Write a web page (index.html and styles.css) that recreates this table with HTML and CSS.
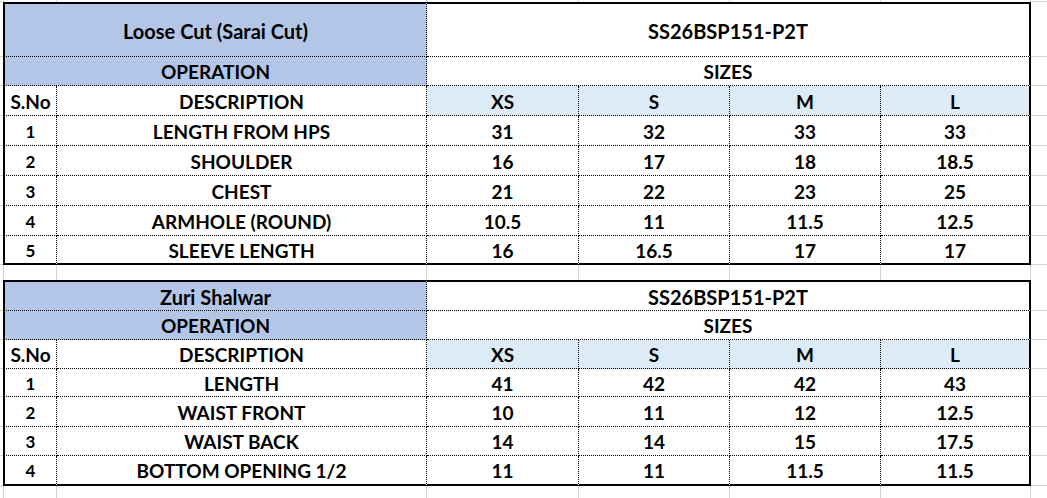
FILE: index.html
```html
<!DOCTYPE html>
<html lang="en">
<head>
<meta charset="utf-8">
<title>Size Chart SS26BSP151-P2T</title>
<link rel="stylesheet" href="styles.css">
</head>
<body>
<div class="sheet">
  <!-- top strip -->
  <div class="row">
    <div class="edge-top"></div>
    <div class="gl first"></div><div class="gl"></div><div class="gl"></div><div class="gl"></div><div class="gl"></div><div class="gl"></div>
    <div class="edge-top"></div>
  </div>

  <!-- table 1 -->
  <div class="row">
    <div class="edge"></div>
    <div class="c blue l t span2 title">Loose Cut (Sarai Cut)</div>
    <div class="c t r span4 title">SS26BSP151-P2T</div>
    <div class="edge"></div>
  </div>
  <div class="row">
    <div class="edge"></div>
    <div class="c blue l span2">OPERATION</div>
    <div class="c r span4">SIZES</div>
    <div class="edge"></div>
  </div>
  <div class="row">
    <div class="edge"></div>
    <div class="c l">S.No</div>
    <div class="c">DESCRIPTION</div>
    <div class="c sz">XS</div><div class="c sz">S</div><div class="c sz">M</div><div class="c sz r">L</div>
    <div class="edge"></div>
  </div>
  <div class="row">
    <div class="edge"></div>
    <div class="c l num">1</div><div class="c">LENGTH FROM HPS</div>
    <div class="c">31</div><div class="c">32</div><div class="c">33</div><div class="c r">33</div>
    <div class="edge"></div>
  </div>
  <div class="row">
    <div class="edge"></div>
    <div class="c l num">2</div><div class="c">SHOULDER</div>
    <div class="c">16</div><div class="c">17</div><div class="c">18</div><div class="c r">18.5</div>
    <div class="edge"></div>
  </div>
  <div class="row">
    <div class="edge"></div>
    <div class="c l num">3</div><div class="c">CHEST</div>
    <div class="c">21</div><div class="c">22</div><div class="c">23</div><div class="c r">25</div>
    <div class="edge"></div>
  </div>
  <div class="row">
    <div class="edge"></div>
    <div class="c l num">4</div><div class="c">ARMHOLE (ROUND)</div>
    <div class="c">10.5</div><div class="c">11</div><div class="c">11.5</div><div class="c r">12.5</div>
    <div class="edge"></div>
  </div>
  <div class="row">
    <div class="edge"></div>
    <div class="c l b num">5</div><div class="c b">SLEEVE LENGTH</div>
    <div class="c b">16</div><div class="c b">16.5</div><div class="c b">17</div><div class="c b r">17</div>
    <div class="edge"></div>
  </div>

  <!-- gap row -->
  <div class="row">
    <div></div>
    <div class="gl first"></div><div class="gl"></div><div class="gl"></div><div class="gl"></div><div class="gl"></div><div class="gl"></div>
    <div></div>
  </div>

  <!-- table 2 -->
  <div class="row">
    <div class="edge"></div>
    <div class="c blue l t span2 title">Zuri Shalwar</div>
    <div class="c t r span4 title">SS26BSP151-P2T</div>
    <div class="edge"></div>
  </div>
  <div class="row">
    <div class="edge"></div>
    <div class="c blue l span2">OPERATION</div>
    <div class="c r span4">SIZES</div>
    <div class="edge"></div>
  </div>
  <div class="row">
    <div class="edge"></div>
    <div class="c l">S.No</div>
    <div class="c">DESCRIPTION</div>
    <div class="c sz">XS</div><div class="c sz">S</div><div class="c sz">M</div><div class="c sz r">L</div>
    <div class="edge"></div>
  </div>
  <div class="row">
    <div class="edge"></div>
    <div class="c l num">1</div><div class="c">LENGTH</div>
    <div class="c">41</div><div class="c">42</div><div class="c">42</div><div class="c r">43</div>
    <div class="edge"></div>
  </div>
  <div class="row">
    <div class="edge"></div>
    <div class="c l num">2</div><div class="c">WAIST FRONT</div>
    <div class="c">10</div><div class="c">11</div><div class="c">12</div><div class="c r">12.5</div>
    <div class="edge"></div>
  </div>
  <div class="row">
    <div class="edge"></div>
    <div class="c l num">3</div><div class="c">WAIST BACK</div>
    <div class="c">14</div><div class="c">14</div><div class="c">15</div><div class="c r">17.5</div>
    <div class="edge"></div>
  </div>
  <div class="row">
    <div class="edge"></div>
    <div class="c l b num">4</div><div class="c b">BOTTOM OPENING 1/2</div>
    <div class="c b">11</div><div class="c b">11</div><div class="c b">11.5</div><div class="c b r">11.5</div>
    <div class="edge"></div>
  </div>

  <!-- bottom strip -->
  <div class="row">
    <div></div>
    <div class="gl first"></div><div class="gl"></div><div class="gl"></div><div class="gl"></div><div class="gl"></div><div class="gl"></div>
    <div></div>
  </div>
</div>
</body>
</html>
```

FILE: styles.css
```css
* {
  box-sizing: border-box;
}

html, body {
  margin: 0;
  padding: 0;
  background: #ffffff;
}

.sheet {
  width: 1047px;
  height: 498px;
  overflow: hidden;
  display: grid;
  grid-template-columns: 3px 54px 370px 152px 151px 151px 150px 1fr;
  grid-template-rows: 2px 55px 29px 30px 30px 30px 30px 30px 29px 15px 31px 29px 29px 28px 30px 29px 30px 1fr;
  font-family: Lato, "Open Sans", sans-serif;
  font-weight: 700;
  font-size: 19px;
  color: #000;
}

.row {
  display: contents;
}

/* spreadsheet gridlines outside the tables */
.gl {
  border-right: 1px solid #d4d4d4;
}
.gl.first {
  border-left: 1px solid #d4d4d4;
}
.edge {
  border-bottom: 1px solid #d4d4d4;
}
.edge-top {
  border-bottom: 1px solid #d4d4d4;
}

/* table cells */
.c {
  display: flex;
  align-items: center;
  justify-content: center;
  white-space: nowrap;
  border-right: 1px dotted #000;
  border-bottom: 1px dotted #000;
  line-height: 1;
  padding-top: 1px;
}
.c.l { border-left: 2px solid #000; }
.c.r { border-right: 2px solid #000; }
.c.t { border-top: 2px solid #000; }
.c.b { border-bottom: 2px solid #000; }

.span2 { grid-column: span 2; }
.span4 { grid-column: span 4; }

.blue { background: #b4c6e7; }
.sz { background: #ddebf7; }

.title { font-size: 20px; }
.num { font-size: 17px; }
```
